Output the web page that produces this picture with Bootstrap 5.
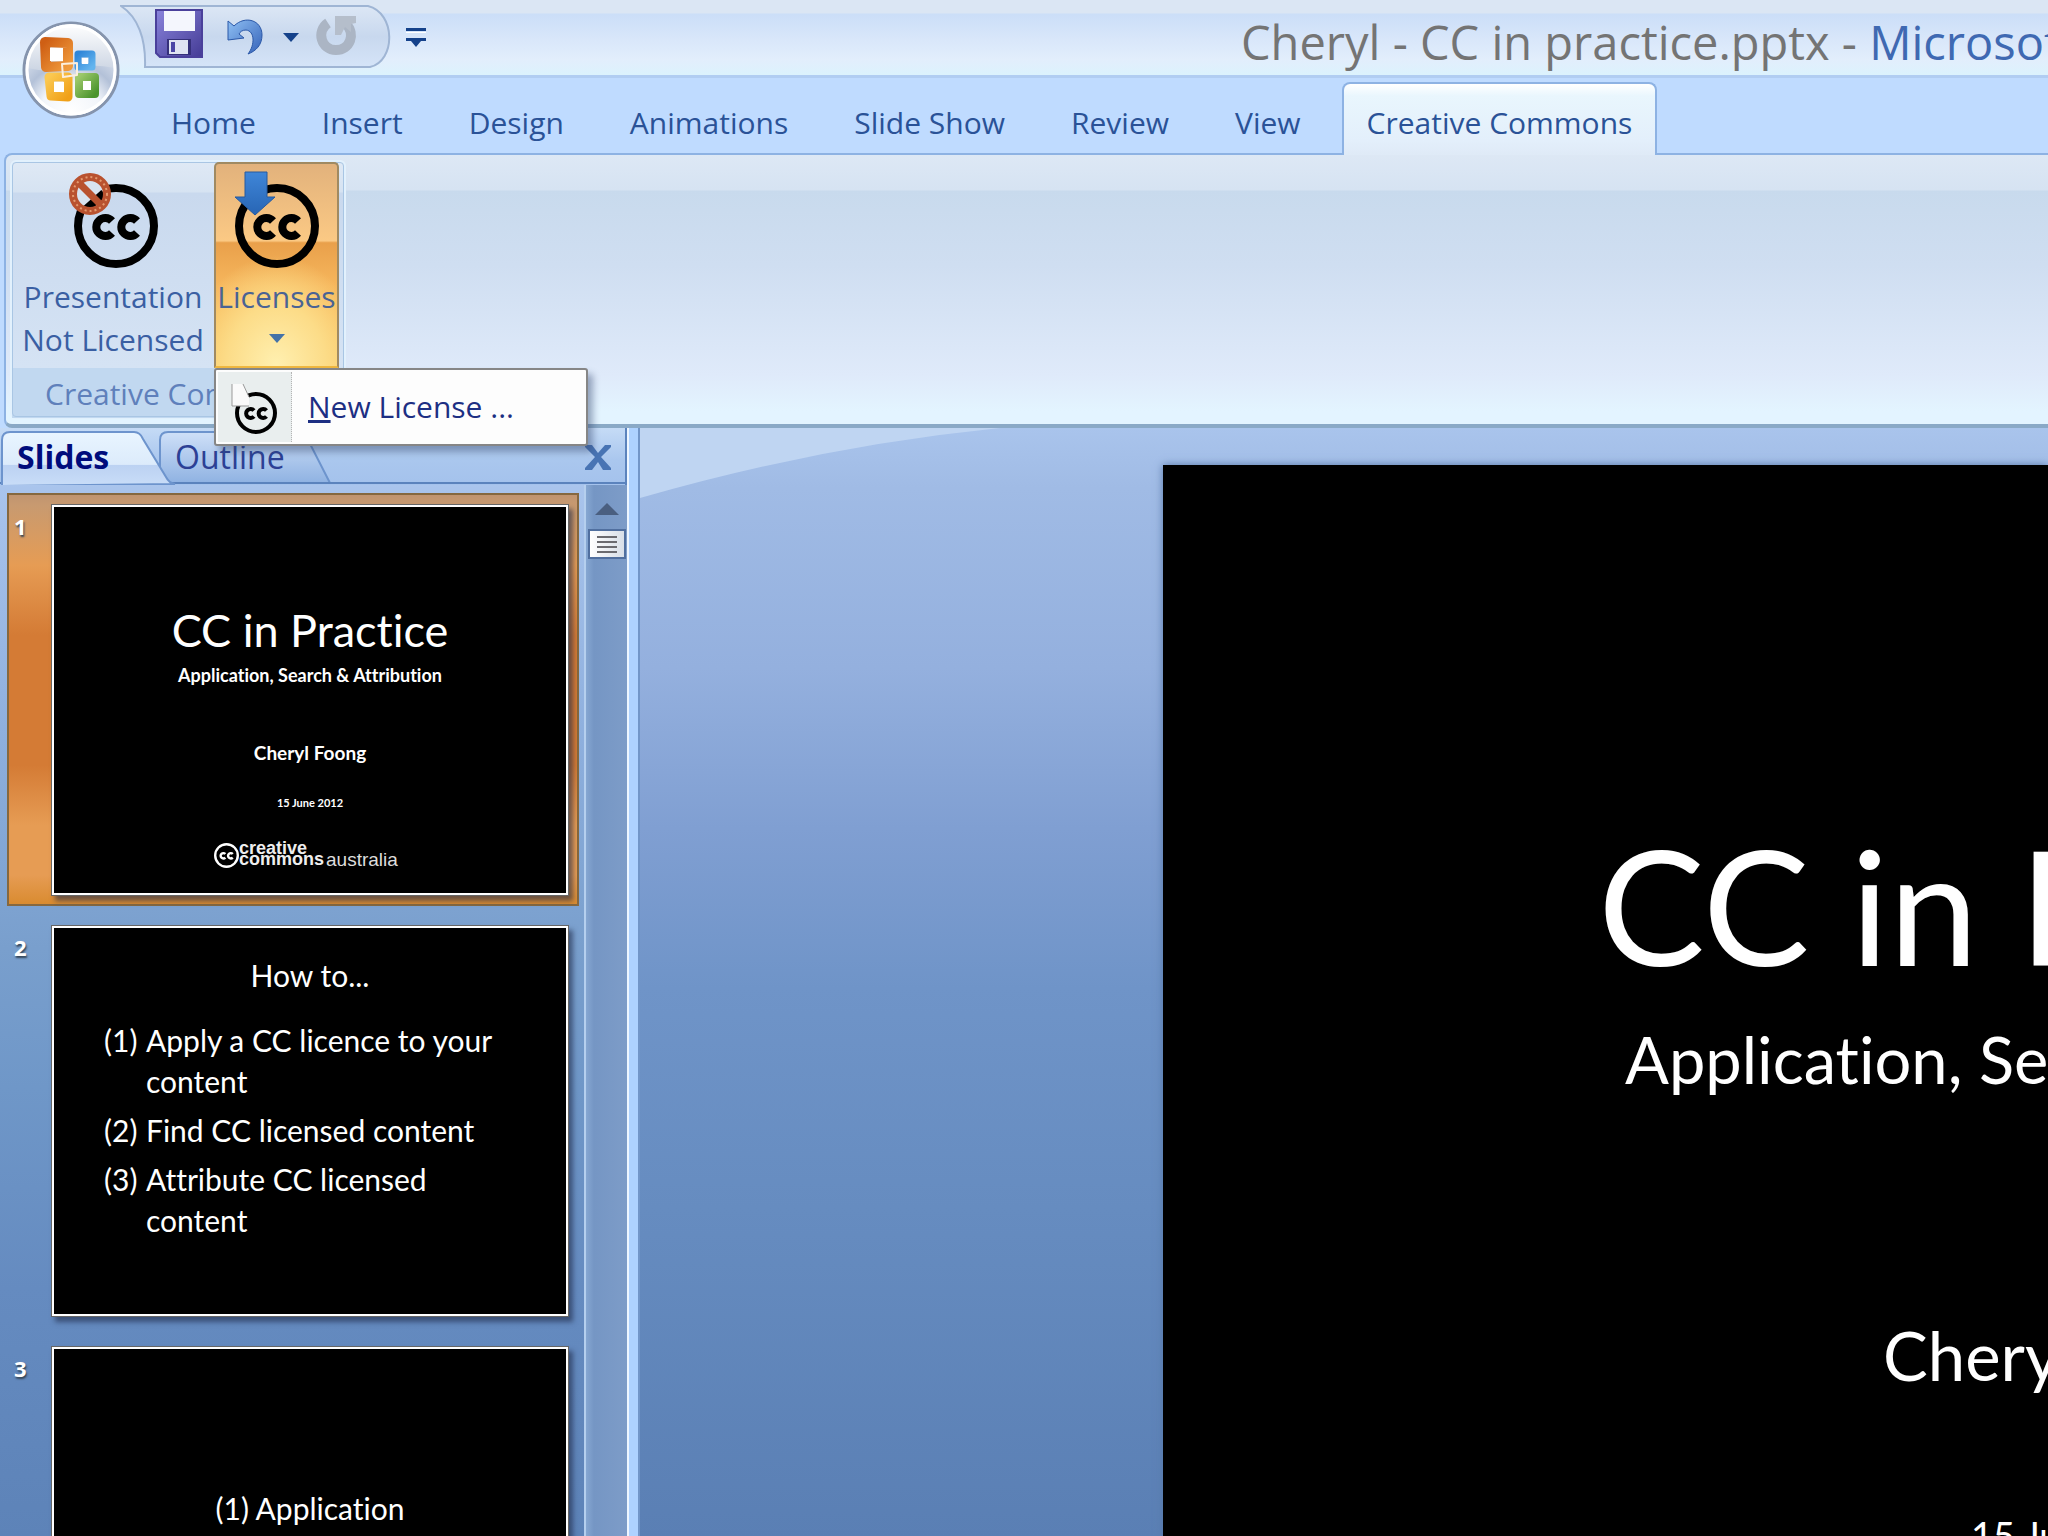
<!DOCTYPE html>
<html lang="en">
<head>
<meta charset="utf-8">
<meta name="viewport" content="width=device-width, initial-scale=1">
<title>Cheryl - CC in practice.pptx - Microsoft PowerPoint</title>
<link href="https://cdn.jsdelivr.net/npm/bootstrap@5.3.0/dist/css/bootstrap.min.css" rel="stylesheet">
<style>
  body { font-family: "Open Sans", "Noto Sans", sans-serif; font-size: 30px; line-height: 40px; color: #15428b; background: #bfdbff; }
  svg { display: block; flex: none; }
  .deck-font { font-family: Lato, "Open Sans", sans-serif; font-variant-ligatures: none; color: #fff; }

  /* title bar */
  .titlebar { height: 78px; background: linear-gradient(#dbe6f4 0 13px, #cbdef8 14px, #d9e7fa 40px, #e2eefc 60px, #dcf2fd 74px); border-bottom: 3px solid #b1cdf2; }
  .office-btn { left: 22px; top: 21px; z-index: 5; }
  .qat { margin-left: 120px; width: 270px; height: 64px; margin-top: 5px; }
  .qat-shape { left: 0; top: 0; }
  .qat-items { padding-left: 35px; }
  .doc-title { font-size: 47px; font-weight: 400; line-height: 72px; padding-left: 815px; padding-top: 6px; color: #747474; }
  .doc-title span { color: #3f69b2; }
  .plain { background: none; border: 0; padding: 0; color: inherit; }

  /* ribbon tabs */
  .ribbon-tabs { height: 75px; padding: 4px 0 0 146px; gap: 16px; border: 0; }
  .ribbon-tabs .nav-link { font-size: 30px; line-height: 40px; padding: 20px 24px 11px; margin: 0; border: 1px solid transparent; border-radius: 8px 8px 0 0; color: #2a5297; }
  .ribbon-tabs .nav-link.active { color: #2a5297; border: 2px solid #8db2e3; border-bottom: 0; padding: 19px 23px 12px; background: linear-gradient(#fff, #e9f6fd 12px, #e3effb 80%, #dfeaf7); position: relative; z-index: 2; }

  /* ribbon body */
  .ribbon { height: 275px; margin-left: 4px; padding: 5px 4px; border: 2px solid #8db2e3; border-right: 0; border-bottom: 4px solid #8aa9c6; border-radius: 8px 0 0 8px; background: linear-gradient(#dde8f5, #d6e3f2 35px, #c8daed 36px, #cfdef1 110px, #dfeafa 220px, #e3f4ff 256px); }
  .rgroup { width: 336px; height: 259px; border: 2px solid #e2f1fd; outline: 1px solid #a9c6e4; outline-offset: -3px; border-radius: 6px; background: linear-gradient(#dfe9f5, #d6e3f2 30px, #c9d9ee 31px, #d5e3f4 205px); }
  .rgroup-foot { height: 50px; padding-left: 33px; line-height: 51px; background: #c1d8f0; color: #5f80bb; white-space: nowrap; }
  .rbtn { font-size: 30px; line-height: 43px; border: 0; border-radius: 0; padding: 7px 0 0; color: #3a5fa3; display: flex; flex-direction: column; justify-content: flex-start; align-items: center; }
  .rbtn-present { width: 202px; }
  .rbtn-lic { width: 125px; height: 206px; color: #4a6394; border: 2px solid #a08a62; border-bottom-color: #f0b840; padding-top: 5px; border-radius: 5px 5px 0 0;
    background: radial-gradient(ellipse 90px 110px at 50% 100%, #fff0b0, #fcdc88 55%, transparent), linear-gradient(#e2b27c, #fbc984 38%, #e9a04b 39%, #f6b65c 60%, #fbc862); }
  .rbtn:hover { color: #15428b; }
  .ink { color: #000; }
  .menu-lic { top: 206px !important; left: 0; width: 374px; height: 78px; padding: 2px; border: 2px solid #868686; border-radius: 3px; background: #fdfdfd; box-shadow: 5px 6px 7px rgba(50,70,110,.45); --bs-dropdown-min-width: 0; }
  .menu-lic .dropdown-item { padding: 0; height: 70px; font-size: 30px; line-height: 40px; color: #1d2f83; }
  .menu-ico { width: 74px; height: 70px; background: #e9eeee; border-right: 1px dotted #b5b5b5; padding-left: 12px; }

  /* slide pane */
  .workarea { background: linear-gradient(#a9c4ec, #a0bbe5 60px, #94b0de 240px, #809fd2 400px, #6f94c8 560px, #668cc0 780px, #5a7fb4 1110px); }
  .pane { width: 629px; border-right: 2px solid #eef6ff; background: linear-gradient(#bdd3f5, #a9c4ec 60px, #8fb0de 300px, #799fcd 520px, #6f97c8 660px, #658bc0 860px, #5d83b8 1110px); }
  .pane-head { height: 57px; padding-right: 13px; border-right: 2px solid #5b83bd; background: linear-gradient(#c5dbf6, #aac7ee 32px, #a4c2ec); }
  .pane-tabs { left: 0; top: 0; }
  .pane-tab { font-size: 32px; line-height: 40px; text-decoration: none; color: #2c4095; }
  .tab-slides { padding-left: 17px; width: 175px; font-weight: 700; color: #000c7c; }
  .thumb-row { padding: 9px 10px 8px 5px; margin: 0 0 8px 7px; width: 572px; border: 2px solid transparent; }
  .thumb-row.current { border-color: #86683f; background: linear-gradient(#c09470, #c89a70 10px, #e69c54 70px, #d47b35 140px, #d47b35 270px, #e69c54 330px, #e69c54 380px, #d98b30); }
  .thumb-no { width: 37px; font: 700 22px/32px "Open Sans", sans-serif; color: #fff; text-shadow: 1px 2px 2px #345; padding-top: 6px; }
  .thumb { width: 518px; height: 392px; background: #000; border: 3px solid #fff; outline: 1px solid #666; outline-offset: -1px; box-shadow: 4px 5px 5px rgba(30,40,70,.6); overflow: hidden; }
  .thumb-title { font-size: 45px; line-height: 52px; padding-top: 97px; }
  .t17 { font-size: 18px; line-height: 24px; font-weight: 700; padding-top: 7px; }
  .t18 { font-size: 19px; line-height: 24px; font-weight: 700; padding-top: 54px; }
  .t12 { font-size: 11px; line-height: 16px; font-weight: 700; padding-top: 30px; }
  .logo-row { padding: 32px 0 0 160px; }
  .cc-words { font: 700 18px/11px "Liberation Sans", sans-serif; color: #eee; }
  .cc-au { font: 19px/20px "Liberation Sans", sans-serif; color: #ddd; padding: 7px 0 0 2px; }
  .t27 { font-size: 30px; line-height: 41px; }
  .howto { padding-top: 27px; }
  .steps { padding: 24px 20px 0 50px; }
  .steps li { display: flex; gap: 4px; margin-bottom: 8px; }
  .steps .n { width: 38px; flex: none; }
  .apply { padding-top: 139px; }
  .track { width: 43px; border-left: 2px solid #b5cfee; background: linear-gradient(90deg, #86a7d2, #7596c4 8px, #7d9cc8); padding-top: 18px; }
  .grip { width: 38px; height: 30px; margin: 14px 0 0 2px; background: linear-gradient(90deg, #fff, #d8dfe8); border: 2px solid #506f9f; }
  .splitter { width: 11px; background: #aed2ff; border-right: 2px solid #7296c8; }
  .canvas { min-width: 0; padding: 37px 0 0 523px; }
  .swoosh { left: 0; top: 0; }
  .bigslide { background: #000; box-shadow: 0 0 8px #5777a8; min-height: 100%; white-space: nowrap; overflow: hidden; }
  .b1 { font-size: 160px; line-height: 200px; padding: 339px 0 0 435px; }
  .b2 { font-size: 65px; line-height: 80px; padding: 15px 0 0 462px; }
  .b3 { font-size: 67px; line-height: 80px; padding: 216px 0 0 720px; }
  .b4 { font-size: 38px; line-height: 60px; padding: 110px 0 0 808px; }
</style>
</head>
<body class="vh-100 overflow-hidden d-flex flex-column">
<svg width="0" height="0" class="position-absolute" aria-hidden="true">
  <defs>
    <symbol id="cc" viewBox="0 0 84 84">
      <circle cx="42" cy="42" r="38" fill="none" stroke="currentColor" stroke-width="8"/>
      <g fill="none" stroke="currentColor" stroke-width="8"><path d="M38 37A9 9 0 1 0 38 49"/><path d="M63 37A9 9 0 1 0 63 49"/></g>
    </symbol>
    <radialGradient id="orb" cx=".5" cy=".95" r=".8"><stop offset="0" stop-color="#fff"/><stop offset=".4" stop-color="#f2f5fa"/><stop offset=".65" stop-color="#b3c1d8"/><stop offset="1" stop-color="#e4eaf3"/></radialGradient>
    <linearGradient id="orbTop" x2="0" y2="1"><stop offset="0" stop-color="#fff"/><stop offset="1" stop-color="#ccd5e3"/></linearGradient>
    <linearGradient id="qatFill" x2="0" y2="1"><stop offset="0" stop-color="#dce7f5"/><stop offset=".5" stop-color="#c8d8ee"/><stop offset="1" stop-color="#d5e4f8"/></linearGradient>
    <linearGradient id="disk" x2="1" y2="1"><stop offset="0" stop-color="#8a84dc"/><stop offset="1" stop-color="#443b95"/></linearGradient>
    <linearGradient id="undo" x2="1" y2="1"><stop offset="0" stop-color="#8fc0f4"/><stop offset="1" stop-color="#3562b8"/></linearGradient>
    <linearGradient id="dn" x2="0" y2="1"><stop offset="0" stop-color="#3f86d8"/><stop offset="1" stop-color="#2865b4"/></linearGradient>
    <linearGradient id="tabA" x2="0" y2="1"><stop offset="0" stop-color="#e9f5ff"/><stop offset=".6" stop-color="#dcebfb"/><stop offset=".62" stop-color="#bcd2f2"/><stop offset="1" stop-color="#c9ddf8"/></linearGradient>
    <linearGradient id="tabB" x2="0" y2="1"><stop offset="0" stop-color="#cfe0f8"/><stop offset="1" stop-color="#8fb2e2"/></linearGradient>
    <linearGradient id="lo" x2="1" y2="1"><stop offset="0" stop-color="#cf5f14"/><stop offset="1" stop-color="#f09a3c"/></linearGradient>
    <linearGradient id="ly" x2="1" y2="1"><stop offset="0" stop-color="#fbc850"/><stop offset="1" stop-color="#f0a018"/></linearGradient>
    <linearGradient id="lb" x2="1" y2="1"><stop offset="0" stop-color="#2f86d8"/><stop offset="1" stop-color="#63b4ee"/></linearGradient>
    <linearGradient id="lg" x2="1" y2="1"><stop offset="0" stop-color="#9cc86a"/><stop offset="1" stop-color="#4a942c"/></linearGradient>
  </defs>
</svg>

<header class="position-relative flex-shrink-0">
  <button class="plain office-btn position-absolute" aria-label="Office Button">
    <svg width="98" height="98" viewBox="0 0 98 98">
      <circle cx="49" cy="49" r="47" fill="url(#orb)" stroke="#8594ad" stroke-width="3"/>
      <path d="M5 47A44 44 0 0 1 93 47Q70 42 49 47T5 47Z" fill="url(#orbTop)"/>
      <circle cx="49" cy="49" r="44" fill="none" stroke="#fff" stroke-width="3"/>
      <g fill="none" stroke-linejoin="round">
        <path d="M23 21L46 22V45L24 46Z" stroke="url(#lo)" stroke-width="10"/>
        <path d="M56 33H70V46H56Z" stroke="url(#lb)" stroke-width="7"/>
        <path d="M27 56H46V76L29 75Z" stroke="url(#ly)" stroke-width="9"/>
        <path d="M57 56H73V73H57Z" stroke="url(#lg)" stroke-width="8"/>
        <path d="M40 43L55 42V54L41 56Z" stroke="#fbeedd" stroke-width="2"/>
      </g>
      <g fill="#fff"><path d="M28 27H41V40H28Z"/><path d="M60 37H66V43H60Z"/><path d="M32 61H42V71H32Z"/><path d="M61 60H69V69H61Z"/></g>
    </svg>
  </button>

  <div class="titlebar d-flex overflow-hidden">
    <div class="qat position-relative flex-shrink-0">
      <svg class="qat-shape position-absolute" width="272" height="66" viewBox="0 0 272 66"><path d="M1 1H248C276 8 276 56 250 62H25C26 34 18 12 1 1Z" fill="url(#qatFill)" stroke="#9fb5d4" stroke-width="2"/></svg>
      <div class="qat-items position-relative d-flex align-items-start pt-1">
        <button class="plain" aria-label="Save"><svg width="48" height="50" viewBox="0 0 48 50"><path d="M1 1H47V48H5L1 44Z" fill="url(#disk)" stroke="#4a409b" stroke-width="2"/><path d="M9 2H40V22H9Z" fill="#f4f6fd"/><path d="M12 30H36V46H12Z" fill="#35307a"/><path d="M14 31H33V45H14Z" fill="#dfe3f2"/><path d="M16 33H20V43H16Z" fill="#4b45a5"/></svg></button>
        <button class="plain ms-4 pt-2" aria-label="Undo"><svg width="36" height="38" viewBox="0 0 36 38"><path d="M1 4L7 9C18 -2 35 3 35 18C35 28 29 34 21 37C28 28 28 14 19 13C15 13 13 15 12 17L17 21L1 23Z" fill="url(#undo)" stroke="#2b58a8" stroke-width="1"/></svg></button>
        <button class="plain ms-3 ps-1 pt-4" aria-label="Undo list"><svg width="16" height="10" viewBox="0 0 16 10"><path d="M0 0H16L8 9Z" fill="#15428b"/></svg></button>
        <button class="plain ms-3 pt-1" aria-label="Redo" disabled><svg width="44" height="44" viewBox="0 0 44 44"><path d="M13 10C1 18 6 37 21 37C35 37 41 21 31 11" fill="none" stroke="#abb5c4" stroke-width="10"/><path d="M20 3H41V10L36 11V19L30 14L26 22H20Z" fill="#b5becb"/></svg></button>
      </div>
    </div>
    <button class="plain flex-shrink-0 ms-3" aria-label="Customize Quick Access Toolbar"><svg width="20" height="20" viewBox="0 0 20 20"><path d="M0 0H20V3H0ZM0 10H20V13H15L10 19L5 13H0Z" fill="#15428b"/><path d="M0 4H20V5H0Z" fill="#fff"/></svg></button>
    <h1 class="doc-title mb-0 text-nowrap">Cheryl - CC in practice.pptx - <span>Microsoft PowerPoint</span></h1>
  </div>

  <nav class="nav nav-tabs ribbon-tabs flex-nowrap text-nowrap align-items-start">
    <a class="nav-link" href="#">Home</a>
    <a class="nav-link" href="#">Insert</a>
    <a class="nav-link" href="#">Design</a>
    <a class="nav-link" href="#">Animations</a>
    <a class="nav-link" href="#">Slide Show</a>
    <a class="nav-link" href="#">Review</a>
    <a class="nav-link" href="#">View</a>
    <a class="nav-link active" href="#" aria-current="page">Creative Commons</a>
  </nav>

  <section class="ribbon">
    <div class="rgroup d-flex flex-column">
      <div class="d-flex">
        <button class="btn rbtn rbtn-present text-nowrap">
          <svg class="ink" width="98" height="106" viewBox="0 0 98 106"><use href="#cc" x="10" y="15" width="84" height="84"/>
            <circle cx="26" cy="25" r="17" fill="#d8e3f0"/><path d="M20 42L40 24" stroke="#000" stroke-width="8"/><circle cx="26" cy="25" r="17" fill="none" stroke="#b9522f" stroke-width="8"/><path d="M14 13L38 37" stroke="#b9522f" stroke-width="7"/><circle cx="26" cy="25" r="17" fill="none" stroke="#e39a70" stroke-width="2" stroke-dasharray="2 3"/></svg>
          <span>Presentation<br>Not Licensed</span>
        </button>
        <div class="dropdown">
          <button class="btn rbtn rbtn-lic" aria-expanded="true">
            <svg class="ink" width="98" height="106" viewBox="0 0 98 106"><use href="#cc" x="7" y="15" width="84" height="84"/><path d="M17 3H39V28H47L27 46L7 28H17Z" fill="url(#dn)" stroke="#265a9f" stroke-width="1"/></svg>
            <span>Licenses</span>
            <svg class="mt-3" width="16" height="10" viewBox="0 0 16 10"><path d="M0 0H16L8 9Z" fill="#4472a8"/></svg>
          </button>
          <div class="dropdown-menu menu-lic show">
            <a class="dropdown-item d-flex align-items-center" href="#">
              <span class="menu-ico d-flex align-items-center me-3"><svg class="ink" width="48" height="60" viewBox="0 0 48 60"><use href="#cc" x="5" y="15" width="42" height="42"/><path d="M2 7H13L19 20V29H2Z" fill="#fafafa"/><path d="M2 7V29H19M13 7L19 20" fill="none" stroke="#999" stroke-width="1"/></svg></span>
              <span><u>N</u>ew License ...</span>
            </a>
          </div>
        </div>
      </div>
      <div class="rgroup-foot mt-auto">Creative Commons</div>
    </div>
  </section>
</header>

<main class="workarea d-flex flex-fill overflow-hidden">
  <aside class="pane flex-shrink-0 d-flex flex-column">
    <div class="pane-head position-relative d-flex align-items-center flex-shrink-0">
      <svg class="pane-tabs position-absolute" width="626" height="57" viewBox="0 0 626 57">
        <path d="M160 55V12Q160 4 168 4H304L330 55Z" fill="url(#tabB)" stroke="#6d94cd" stroke-width="2"/>
        <path d="M0 55H626" stroke="#5b83bd" stroke-width="2"/>
        <path d="M2 58V12Q2 4 10 4H134Q140 4 143 11L166 49Q169 55 175 56Z" fill="url(#tabA)" stroke="#6d94cd" stroke-width="2"/>
      </svg>
      <a class="pane-tab tab-slides position-relative" href="#">Slides</a>
      <a class="pane-tab position-relative" href="#">Outline</a>
      <button class="plain position-relative ms-auto" aria-label="Close pane"><svg width="28" height="26" viewBox="0 0 28 26"><path d="M1 1H8L14 9L21 1H27V3L17 13L27 24V26H19L14 18L8 26H1V24L11 13L1 3Z" fill="#4874b4"/></svg></button>
    </div>
    <div class="d-flex flex-fill overflow-hidden">
      <ol class="list-unstyled mb-0 flex-fill pt-2 deck-font text-center">
        <li class="thumb-row current d-flex">
          <span class="thumb-no flex-shrink-0 text-start">1</span>
          <div class="thumb flex-shrink-0">
            <div class="thumb-title">CC in Practice</div>
            <div class="t17">Application, Search &amp; Attribution</div>
            <div class="t18">Cheryl Foong</div>
            <div class="t12">15 June 2012</div>
            <div class="logo-row d-flex text-start"><svg width="25" height="25" viewBox="0 0 84 84" class="text-white"><use href="#cc"/></svg><span class="cc-words">creative<br>commons</span><span class="cc-au">australia</span></div>
          </div>
        </li>
        <li class="thumb-row d-flex">
          <span class="thumb-no flex-shrink-0 text-start">2</span>
          <div class="thumb flex-shrink-0">
            <div class="t27 howto">How to...</div>
            <ul class="steps t27 list-unstyled text-start mb-0">
              <li><span class="n">(1)</span><span>Apply a CC licence to your content</span></li>
              <li><span class="n">(2)</span><span>Find CC licensed content</span></li>
              <li><span class="n">(3)</span><span>Attribute CC licensed<br>content</span></li>
            </ul>
          </div>
        </li>
        <li class="thumb-row d-flex">
          <span class="thumb-no flex-shrink-0 text-start">3</span>
          <div class="thumb flex-shrink-0"><div class="t27 apply">(1) Application</div></div>
        </li>
      </ol>
      <div class="track flex-shrink-0">
        <svg class="mx-auto" width="24" height="12" viewBox="0 0 24 12"><path d="M0 12L12 0L24 12Z" fill="#4a5f80"/></svg>
        <div class="grip d-flex align-items-center justify-content-center"><svg width="20" height="18" viewBox="0 0 20 18"><path d="M0 2H20M0 7H20M0 12H20M0 17H20" stroke="#6b6b70" stroke-width="2"/></svg></div>
      </div>
    </div>
  </aside>
  <div class="splitter flex-shrink-0"></div>
  <section class="canvas flex-fill position-relative">
    <svg class="swoosh position-absolute" width="370" height="72" viewBox="0 0 370 72"><path d="M0 0H360Q180 18 0 70Z" fill="#bfd5f2"/></svg>
    <div class="bigslide deck-font position-relative">
      <div class="b1">CC in Practice</div>
      <div class="b2">Application, Search &amp; Attribution</div>
      <div class="b3">Cheryl Foong</div>
      <div class="b4">15 June 2012</div>
    </div>
  </section>
</main>
<script src="https://cdn.jsdelivr.net/npm/bootstrap@5.3.0/dist/js/bootstrap.bundle.min.js"></script>
</body>
</html>
